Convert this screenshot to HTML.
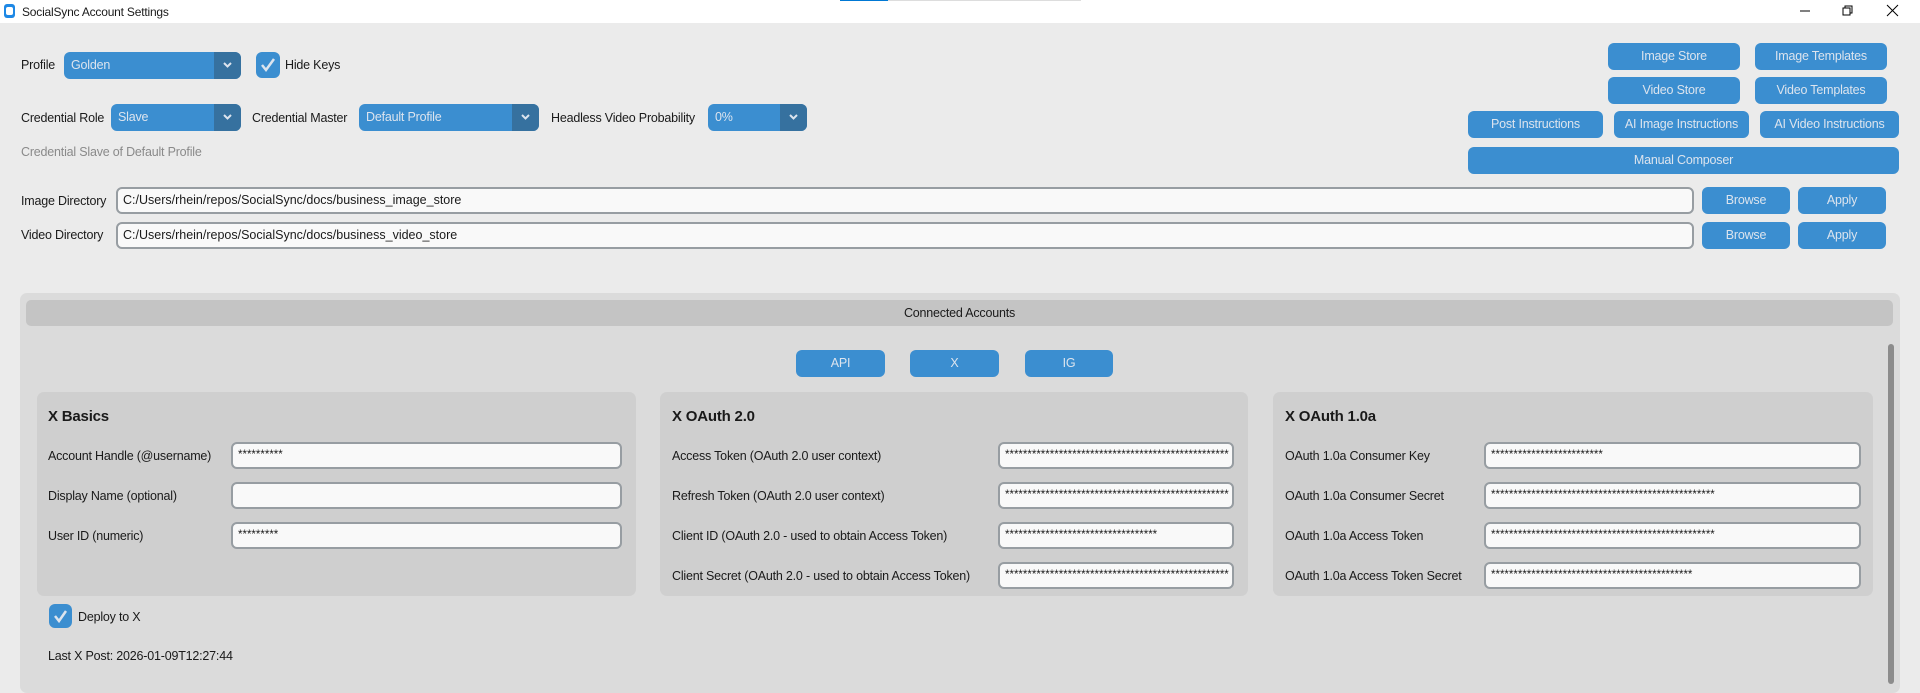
<!DOCTYPE html>
<html><head><meta charset="utf-8"><style>
*{box-sizing:border-box;margin:0;padding:0}
body{width:1920px;height:679px;overflow:hidden;background:#ebebeb;font-family:"Liberation Sans",sans-serif;font-size:12.5px;letter-spacing:-0.2px;color:#1a1a1a;position:relative}
.a{position:absolute}
.tb{left:0;top:0;width:1920px;height:23px;background:#fff}
.lbl{position:absolute;line-height:16px;white-space:nowrap}
.combo{position:absolute;height:27px;background:#3b8ed0;border-radius:6px;color:#dce4ee;line-height:27px;padding-left:7px;overflow:hidden}
.combo .ar{position:absolute;right:0;top:0;width:27px;height:27px;background:#36719f}
.combo .ar svg{position:absolute;left:9px;top:10px}
.btn{position:absolute;background:#3b8ed0;border-radius:6px;color:#dce4ee;text-align:center;line-height:27px;height:27px}
.ent{position:absolute;height:27px;background:#f9f9f9;border:2px solid #979da2;border-radius:6px;line-height:22px;padding-left:5px;overflow:hidden;white-space:nowrap;color:#1a1a1a;font-size:11.5px;letter-spacing:0}
.chk{position:absolute;background:#3b8ed0;border-radius:6px}
.card{position:absolute;background:#cfcfcf;border-radius:7px;top:392px;height:204px}
.h{position:absolute;font-weight:bold;font-size:15px}
</style></head><body>
<div class="a tb"></div>
<div class="a" style="left:4px;top:4px;width:11px;height:14px;border-radius:3px;background:#1e88e5"><div style="position:absolute;left:2px;top:3px;width:7px;height:8px;background:#fff;border-radius:2px"></div></div>
<div class="lbl" style="left:22px;top:4px;font-size:12px">SocialSync Account Settings</div>
<div class="a" style="left:840px;top:0;width:48px;height:1px;background:#0078d4"></div>
<div class="a" style="left:888px;top:0;width:193px;height:1px;background:#ddd"></div>
<svg class="a" style="left:1795px;top:4px" width="120" height="14"><path d="M5 7h10" stroke="#000" stroke-width="1"/><path d="M48 4h7v7h-7z M50 4V2h7v7h-2" fill="none" stroke="#000"/><path d="M92 1l11 11M103 1l-11 11" stroke="#000"/></svg>

<div class="lbl" style="left:21px;top:57px">Profile</div>
<div class="combo" style="left:64px;top:52px;width:177px">Golden<div class="ar"><svg width="9" height="7"><path d="M1 1l3.5 3.5L8 1" stroke="#dce4ee" stroke-width="2" fill="none"/></svg></div></div>
<div class="chk" style="left:256px;top:52px;width:24px;height:26px"><svg width="24" height="26"><path d="M6 13l4 5 8-11" stroke="#dce4ee" stroke-width="2.5" fill="none"/></svg></div>
<div class="lbl" style="left:285px;top:57px">Hide Keys</div>

<div class="lbl" style="left:21px;top:110px">Credential Role</div>
<div class="combo" style="left:111px;top:104px;width:130px">Slave<div class="ar"><svg width="9" height="7"><path d="M1 1l3.5 3.5L8 1" stroke="#dce4ee" stroke-width="2" fill="none"/></svg></div></div>
<div class="lbl" style="left:252px;top:110px">Credential Master</div>
<div class="combo" style="left:359px;top:104px;width:180px">Default Profile<div class="ar"><svg width="9" height="7"><path d="M1 1l3.5 3.5L8 1" stroke="#dce4ee" stroke-width="2" fill="none"/></svg></div></div>
<div class="lbl" style="left:551px;top:110px">Headless Video Probability</div>
<div class="combo" style="left:708px;top:104px;width:99px">0%<div class="ar"><svg width="9" height="7"><path d="M1 1l3.5 3.5L8 1" stroke="#dce4ee" stroke-width="2" fill="none"/></svg></div></div>
<div class="lbl" style="left:21px;top:144px;color:#8a8a8a">Credential Slave of Default Profile</div>

<div class="lbl" style="left:21px;top:193px">Image Directory</div>
<div class="ent" style="left:116px;top:187px;width:1578px;font-size:12.5px">C:/Users/rhein/repos/SocialSync/docs/business_image_store</div>
<div class="btn" style="left:1702px;top:187px;width:88px">Browse</div>
<div class="btn" style="left:1798px;top:187px;width:88px">Apply</div>
<div class="lbl" style="left:21px;top:227px">Video Directory</div>
<div class="ent" style="left:116px;top:222px;width:1578px;font-size:12.5px">C:/Users/rhein/repos/SocialSync/docs/business_video_store</div>
<div class="btn" style="left:1702px;top:222px;width:88px">Browse</div>
<div class="btn" style="left:1798px;top:222px;width:88px">Apply</div>

<div class="btn" style="left:1608px;top:43px;width:132px">Image Store</div>
<div class="btn" style="left:1755px;top:43px;width:132px">Image Templates</div>
<div class="btn" style="left:1608px;top:77px;width:132px">Video Store</div>
<div class="btn" style="left:1755px;top:77px;width:132px">Video Templates</div>
<div class="btn" style="left:1468px;top:111px;width:135px">Post Instructions</div>
<div class="btn" style="left:1614px;top:111px;width:135px">AI Image Instructions</div>
<div class="btn" style="left:1760px;top:111px;width:139px">AI Video Instructions</div>
<div class="btn" style="left:1468px;top:147px;width:431px">Manual Composer</div>

<div class="a" style="left:20px;top:293px;width:1880px;height:400px;background:#dbdbdb;border-radius:7px"></div>
<div class="a" style="left:26px;top:300px;width:1867px;height:26px;background:#c4c4c4;border-radius:5px;text-align:center;line-height:26px">Connected Accounts</div>
<div class="btn" style="left:796px;top:350px;width:89px">API</div>
<div class="btn" style="left:910px;top:350px;width:89px">X</div>
<div class="btn" style="left:1025px;top:350px;width:88px">IG</div>
<div class="a" style="left:1888px;top:344px;width:6px;height:340px;background:#8c8c8c;border-radius:3px"></div>

<div class="card" style="left:37px;width:599px"></div>
<div class="card" style="left:660px;width:588px"></div>
<div class="card" style="left:1273px;width:600px"></div>
<div class="h" style="left:48px;top:408px">X Basics</div>
<div class="h" style="left:672px;top:408px">X OAuth 2.0</div>
<div class="h" style="left:1285px;top:408px">X OAuth 1.0a</div>

<div class="lbl" style="left:48px;top:448px">Account Handle (@username)</div>
<div class="lbl" style="left:48px;top:488px">Display Name (optional)</div>
<div class="lbl" style="left:48px;top:528px">User ID (numeric)</div>
<div class="ent" style="left:231px;top:442px;width:391px">**********</div>
<div class="ent" style="left:231px;top:482px;width:391px"></div>
<div class="ent" style="left:231px;top:522px;width:391px">*********</div>

<div class="lbl" style="left:672px;top:448px">Access Token (OAuth 2.0 user context)</div>
<div class="lbl" style="left:672px;top:488px">Refresh Token (OAuth 2.0 user context)</div>
<div class="lbl" style="left:672px;top:528px">Client ID (OAuth 2.0 - used to obtain Access Token)</div>
<div class="lbl" style="left:672px;top:568px">Client Secret (OAuth 2.0 - used to obtain Access Token)</div>
<div class="ent" style="left:998px;top:442px;width:236px">**************************************************</div>
<div class="ent" style="left:998px;top:482px;width:236px">**************************************************</div>
<div class="ent" style="left:998px;top:522px;width:236px">**********************************</div>
<div class="ent" style="left:998px;top:562px;width:236px">**************************************************</div>

<div class="lbl" style="left:1285px;top:448px">OAuth 1.0a Consumer Key</div>
<div class="lbl" style="left:1285px;top:488px">OAuth 1.0a Consumer Secret</div>
<div class="lbl" style="left:1285px;top:528px">OAuth 1.0a Access Token</div>
<div class="lbl" style="left:1285px;top:568px">OAuth 1.0a Access Token Secret</div>
<div class="ent" style="left:1484px;top:442px;width:377px">*************************</div>
<div class="ent" style="left:1484px;top:482px;width:377px">**************************************************</div>
<div class="ent" style="left:1484px;top:522px;width:377px">**************************************************</div>
<div class="ent" style="left:1484px;top:562px;width:377px">*********************************************</div>

<div class="chk" style="left:49px;top:604px;width:23px;height:24px"><svg width="23" height="24"><path d="M6 12l4 5 7-10" stroke="#dce4ee" stroke-width="2.5" fill="none"/></svg></div>
<div class="lbl" style="left:78px;top:609px">Deploy to X</div>
<div class="lbl" style="left:48px;top:648px">Last X Post: 2026-01-09T12:27:44</div>
</body></html>
